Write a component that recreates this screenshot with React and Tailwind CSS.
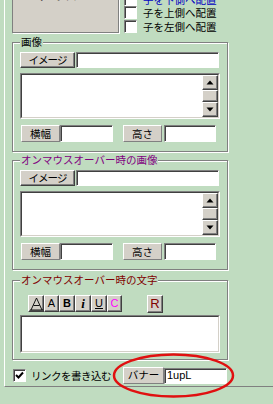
import React from 'react';

const raised = 'bg-[#d4d0c8] border border-t-white border-l-white border-b-[#404040] border-r-[#404040] shadow-[inset_-1px_-1px_0_#808080]';
const sunken = 'bg-white border border-t-[#808080] border-l-[#808080] border-b-white border-r-white shadow-[inset_1px_1px_0_#404040]';
const label = 'bg-[#d4d0c8] border border-t-white border-l-white border-b-[#808080] border-r-[#808080] flex items-center justify-center';

const Check = ({ checked = false }) => (
  <div className={`w-[13px] h-[13px] shrink-0 ${sunken} flex items-center justify-center`}>
    {checked && (
      <svg width="9" height="9" viewBox="0 0 9 9">
        <path d="M1 4 L3.5 6.5 L8 1.5" fill="none" stroke="#000" strokeWidth="2" />
      </svg>
    )}
  </div>
);

const Arrow = ({ up }) => (
  <svg width="8" height="5" viewBox="0 0 8 5">
    <polygon points={up ? '0.5,4.5 7.5,4.5 4,0.5' : '0.5,0.5 7.5,0.5 4,4.5'} fill="#000" />
  </svg>
);

const TextArea = ({ height, scroll = false }) => (
  <div className="w-[200px] border border-t-[#808080] border-l-[#808080] border-b-white border-r-white" style={{ height }}>
    <div className="h-full flex border border-t-[#404040] border-l-[#404040] border-b-[#d4d0c8] border-r-[#d4d0c8] bg-white">
      <div className="flex-1" />
      {scroll && (
        <div className="w-[16px] flex flex-col">
          <div className={`h-[15px] ${raised} flex items-center justify-center`}><Arrow up /></div>
          <div className={`flex-1 ${raised}`} />
          <div className={`h-[15px] ${raised} flex items-center justify-center`}><Arrow /></div>
        </div>
      )}
    </div>
  </div>
);

const Group = ({ title, color, height, className = '', children }) => (
  <div
    className={`relative w-[216px] border border-[#808080] shadow-[1px_1px_0_white,inset_1px_1px_0_white] ${className}`}
    style={{ height }}
  >
    <span className={`absolute left-[7px] top-[-7px] px-[1px] bg-[#c0dcc0] leading-[12px] ${color}`}>{title}</span>
    {children}
  </div>
);

const ImageGroup = ({ title, color, className }) => (
  <Group title={title} color={color} height={110} className={className}>
    <div className="pl-[7px] pt-[9px]">
      <div className="flex">
        <button className={`w-[55px] h-[16px] ${raised} flex items-center justify-center leading-none tracking-[-1px]`}>イメージ</button>
        <div className={`ml-[1px] w-[143px] h-[16px] ${sunken}`} />
      </div>
      <div className="mt-[5px]">
        <TextArea height={46} scroll />
      </div>
      <div className="flex mt-[6px]">
        <div className={`ml-[1px] w-[39px] h-[17px] ${label}`}>横幅</div>
        <div className={`w-[53px] h-[17px] ${sunken}`} />
        <div className={`ml-[10px] w-[39px] h-[17px] ${label}`}>高さ</div>
        <div className={`ml-[2px] w-[52px] h-[17px] ${sunken}`} />
      </div>
    </div>
  </Group>
);

export default function App() {
  return (
    <div className="relative w-[273px] h-[404px] overflow-hidden bg-[#c0dcc0] text-[10.5px] text-black font-['Noto_Sans_CJK_JP',sans-serif]">
      <div className="ml-[4px] h-[401px] border-l border-white border-b border-b-[#808080] pl-[7px]">
        {/* top: preview box + placement checkboxes */}
        <div className="flex mt-[-14px] h-[47px]">
          <div className="w-[107px] h-[47px] bg-[#d4d0c8] border border-[#808080] border-t-0 shadow-[1px_1px_0_white] flex justify-center">
            <span className="mt-[3px] font-bold text-[12px] leading-[12px] tracking-[2px]">テキスト</span>
          </div>
          <div className="ml-[5px] mt-[7px] flex flex-col">
            {['子を下側へ配置', '子を上側へ配置', '子を左側へ配置'].map((t, i) => (
              <div key={t} className="h-[14px] flex items-center gap-[6px] overflow-hidden">
                <Check />
                <span className={`leading-[11px] ${i === 0 ? 'text-[#0000c0]' : ''}`}>{t}</span>
              </div>
            ))}
          </div>
        </div>

        <ImageGroup title="画像" color="text-black" className="mt-[9px]" />
        <ImageGroup title="オンマウスオーバー時の画像" color="text-[#800080]" className="mt-[8px]" />

        <Group title="オンマウスオーバー時の文字" color="text-[#800000]" height={80} className="mt-[10px]">
          <div className="pl-[7px] pt-[14px]">
            <div className="flex items-start ml-[8px]">
              <button className={`w-[16px] h-[17px] ${raised} flex items-center justify-center`}>
                <svg width="13" height="14" viewBox="0 0 13 14">
                  <path d="M1 13 L6.5 1 L12 13 M3.5 8.5 H9.5 M0 13 H13" fill="none" stroke="#000" strokeWidth="0.9" />
                </svg>
              </button>
              <button className={`w-[15px] h-[17px] ${raised} flex items-center justify-center font-['Liberation_Sans',sans-serif] text-[11px]`}>A</button>
              <button className={`w-[16px] h-[17px] ${raised} flex items-center justify-center font-['Liberation_Sans',sans-serif] font-bold text-[11px]`}>B</button>
              <button className={`w-[16px] h-[17px] ${raised} flex items-center justify-center font-['Liberation_Serif',serif] italic font-bold text-[13px]`}>i</button>
              <button className={`w-[16px] h-[17px] ${raised} flex items-center justify-center font-['Liberation_Sans',sans-serif] underline text-[11px]`}>U</button>
              <button className={`w-[15px] h-[17px] ${raised} flex items-center justify-center font-['Liberation_Sans',sans-serif] text-[11px] text-[#ff00ff]`}>C</button>
              <button className={`ml-[25px] w-[16px] h-[18px] ${raised} flex items-center justify-center font-['Liberation_Sans',sans-serif] text-[13px] text-[#800000]`}>R</button>
            </div>
            <div className="mt-[2px]">
              <TextArea height={38} />
            </div>
          </div>
        </Group>

        {/* bottom row */}
        <div className="flex items-center mt-[7px] h-[17px]">
          <div className="w-[111px] flex items-center">
            <div className="ml-[1px]"><Check checked /></div>
            <span className="ml-[5px] leading-[12px] tracking-[-0.5px]">リンクを書き込む</span>
          </div>
          <div className={`w-[41px] h-[17px] ${label} leading-none`}>バナー</div>
          <div className={`w-[63px] h-[16px] ${sunken} flex items-center pl-[2px] font-['Liberation_Sans',sans-serif] text-[11px] leading-none`}>1upL</div>
        </div>
      </div>

      <svg className="absolute inset-0 pointer-events-none" width="273" height="404">
        <ellipse cx="173.5" cy="375.5" rx="59.5" ry="21" fill="none" stroke="#e01010" strokeWidth="2.5" />
      </svg>
    </div>
  );
}
